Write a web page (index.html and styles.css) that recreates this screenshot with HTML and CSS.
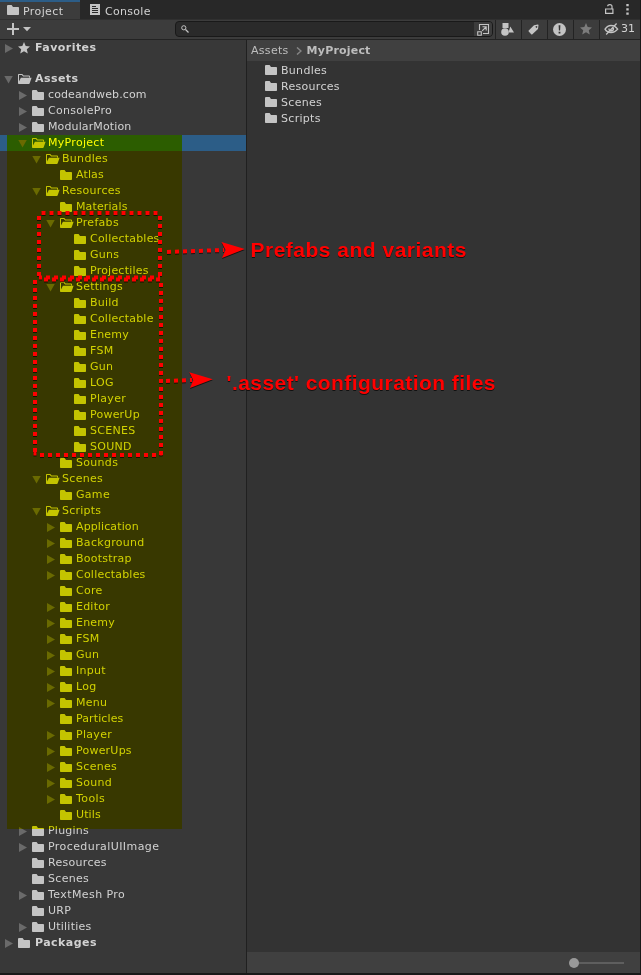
FILE: index.html
```html
<!DOCTYPE html>
<html lang="en">
<head>
<meta charset="utf-8">
<title>Project</title>
<link rel="stylesheet" href="styles.css">
</head>
<body>
<svg class="defs" width="0" height="0">
  <symbol id="folder" viewBox="0 0 12 10"><path d="M0 1Q0 0 1 0H4.6L6 2H11.2Q12 2 12 2.8V9.2Q12 10 11.2 10H.8Q0 10 0 9.2Z"/></symbol>
  <symbol id="open" viewBox="0 0 14 10"><path d="M0 .8Q0 0 .8 0H4.3L5.6 1.6H11Q12 1.6 12 2.6V3.6H11V2.6H5.1L3.8 1H1V7.5L2.9 3.8H13.6L11.7 9.3Q11.5 10 10.8 10H.8Q0 10 0 9.2Z"/></symbol>
  <symbol id="star" viewBox="0 0 12 12"><path d="M6 0L7.7 4.1L12 4.5L8.8 7.3L9.8 11.6L6 9.3L2.2 11.6L3.2 7.3L0 4.5L4.3 4.1Z"/></symbol>
</svg>
<div class="window">
  <header class="tabs">
    <div class="tab active"><svg class="f"><use href="#folder"/></svg><span>Project</span></div>
    <div class="tab console"><svg width="10" height="11" viewBox="0 0 10 11"><path fill-rule="evenodd" d="M0 0H10V11H0ZM2 2V3H6V2ZM2 4V5H8V4ZM2 6V7H8V6ZM2 8V9H8V8Z"/></svg><span>Console</span></div>
    <div class="tabtools">
      <svg width="9" height="10" viewBox="0 0 9 10"><path d="M.6 5H7.9V9.4H.6ZM7 5V2.5Q7 .6 4.8 .6Q2.7 .6 2.7 2.3" fill="none" stroke="#c4c4c4" stroke-width="1.2"/></svg>
      <svg width="3" height="11" viewBox="0 0 3 11"><path d="M.3 0h2.4v2.3H.3zM.3 4.2h2.4v2.3H.3zM.3 8.4h2.4v2.3H.3z"/></svg>
    </div>
  </header>
  <div class="toolbar">
    <svg class="add" width="24" height="12" viewBox="0 0 24 12"><path d="M5 0H7V5H12V7H7V12H5V7H0V5H5ZM16 4H24L20 8.2Z"/></svg>
    <div class="search">
      <svg width="8" height="8" viewBox="0 0 8 8"><path d="M4.5 4.5L7.5 7.5" stroke="#c4c4c4" stroke-width="1.3"/><circle cx="2.8" cy="2.8" r="2.1" fill="none" stroke="#c4c4c4"/></svg>
      <span class="pop"><svg width="13" height="13" viewBox="0 0 13 13"><path d="M2.5 7V1.5H11.5V10.5H6M.7 8.7H4.3V12.3H.7ZM5.2 7.8L9 4M5.5 3.8H9.2V7.5" fill="none" stroke="#c4c4c4" stroke-width="1.1"/></svg></span>
    </div>
    <div class="btn"><svg width="13" height="13" viewBox="0 0 13 13"><path d="M1.5 0H7.5V5H1.5ZM9.3 3.5L13 9.5H7.5Z"/><circle cx="4" cy="9" r="3.8"/></svg></div>
    <div class="btn"><svg width="11" height="11" viewBox="0 0 11 11"><path fill-rule="evenodd" d="M6 1.2L9.8 .5Q10.6 .4 10.5 1.2L10 5L4.4 10.2Q3.8 10.7 3.2 10.2L.7 7.6Q.2 7 .7 6.4ZM8.4 1.9A.9 .9 0 1 0 8.5 1.9Z"/></svg></div>
    <div class="btn"><svg width="13" height="13" viewBox="0 0 13 13"><circle cx="6.5" cy="6.5" r="6.5"/><path d="M5.6 2.2H7.4L7.1 7.6H5.9ZM5.6 8.8H7.4V10.5H5.6Z" fill="#333"/></svg></div>
    <div class="btn fav"><svg width="12" height="12"><use href="#star"/></svg></div>
    <div class="btn hidden"><svg width="15" height="12" viewBox="0 0 15 12"><path d="M1 6.2Q3.5 2.5 7 2.5Q11 2.5 13.7 6.2Q11 9.6 7 9.6Q3 9.6 1 6.2ZM2.2 11.5L12.6 .5M5 5.5Q4.8 8 7 8Q9.7 7.8 9.5 5" fill="none" stroke="#c4c4c4" stroke-width="1.3"/></svg><span>31</span></div>
  </div>
  <main class="panes">
    <ul class="tree">
      <li class="l0 b first"><i class="c"></i><svg class="s"><use href="#star"/></svg>Favorites</li>
      <li class="l0 b"><i class="e"></i><svg class="o"><use href="#open"/></svg>Assets</li>
      <li class="l1 tight"><i class="c"></i><svg class="f"><use href="#folder"/></svg>codeandweb.com</li>
      <li class="l1"><i class="c"></i><svg class="f"><use href="#folder"/></svg>ConsolePro</li>
      <li class="l1 tight"><i class="c"></i><svg class="f"><use href="#folder"/></svg>ModularMotion</li>
      <li class="l1 selected"><i class="e"></i><svg class="o"><use href="#open"/></svg>MyProject</li>
      <li class="l2"><i class="e"></i><svg class="o"><use href="#open"/></svg>Bundles</li>
      <li class="l3 tight"><i></i><svg class="f"><use href="#folder"/></svg>Atlas</li>
      <li class="l2"><i class="e"></i><svg class="o"><use href="#open"/></svg>Resources</li>
      <li class="l3 tight"><i></i><svg class="f"><use href="#folder"/></svg>Materials</li>
      <li class="l3"><i class="e"></i><svg class="o"><use href="#open"/></svg>Prefabs</li>
      <li class="l4 snug"><i></i><svg class="f"><use href="#folder"/></svg>Collectables</li>
      <li class="l4"><i></i><svg class="f"><use href="#folder"/></svg>Guns</li>
      <li class="l4 snug"><i></i><svg class="f"><use href="#folder"/></svg>Projectiles</li>
      <li class="l3 snug"><i class="e"></i><svg class="o"><use href="#open"/></svg>Settings</li>
      <li class="l4 snug"><i></i><svg class="f"><use href="#folder"/></svg>Build</li>
      <li class="l4 snug"><i></i><svg class="f"><use href="#folder"/></svg>Collectable</li>
      <li class="l4 snug"><i></i><svg class="f"><use href="#folder"/></svg>Enemy</li>
      <li class="l4"><i></i><svg class="f"><use href="#folder"/></svg>FSM</li>
      <li class="l4"><i></i><svg class="f"><use href="#folder"/></svg>Gun</li>
      <li class="l4"><i></i><svg class="f"><use href="#folder"/></svg>LOG</li>
      <li class="l4"><i></i><svg class="f"><use href="#folder"/></svg>Player</li>
      <li class="l4 snug"><i></i><svg class="f"><use href="#folder"/></svg>PowerUp</li>
      <li class="l4"><i></i><svg class="f"><use href="#folder"/></svg>SCENES</li>
      <li class="l4"><i></i><svg class="f"><use href="#folder"/></svg>SOUND</li>
      <li class="l3"><i></i><svg class="f"><use href="#folder"/></svg>Sounds</li>
      <li class="l2"><i class="e"></i><svg class="o"><use href="#open"/></svg>Scenes</li>
      <li class="l3"><i></i><svg class="f"><use href="#folder"/></svg>Game</li>
      <li class="l2 snug"><i class="e"></i><svg class="o"><use href="#open"/></svg>Scripts</li>
      <li class="l3 tight"><i class="c"></i><svg class="f"><use href="#folder"/></svg>Application</li>
      <li class="l3"><i class="c"></i><svg class="f"><use href="#folder"/></svg>Background</li>
      <li class="l3 snug"><i class="c"></i><svg class="f"><use href="#folder"/></svg>Bootstrap</li>
      <li class="l3 snug"><i class="c"></i><svg class="f"><use href="#folder"/></svg>Collectables</li>
      <li class="l3"><i></i><svg class="f"><use href="#folder"/></svg>Core</li>
      <li class="l3 snug"><i class="c"></i><svg class="f"><use href="#folder"/></svg>Editor</li>
      <li class="l3 snug"><i class="c"></i><svg class="f"><use href="#folder"/></svg>Enemy</li>
      <li class="l3"><i class="c"></i><svg class="f"><use href="#folder"/></svg>FSM</li>
      <li class="l3"><i class="c"></i><svg class="f"><use href="#folder"/></svg>Gun</li>
      <li class="l3"><i class="c"></i><svg class="f"><use href="#folder"/></svg>Input</li>
      <li class="l3"><i class="c"></i><svg class="f"><use href="#folder"/></svg>Log</li>
      <li class="l3 snug"><i class="c"></i><svg class="f"><use href="#folder"/></svg>Menu</li>
      <li class="l3 tight"><i></i><svg class="f"><use href="#folder"/></svg>Particles</li>
      <li class="l3"><i class="c"></i><svg class="f"><use href="#folder"/></svg>Player</li>
      <li class="l3 snug"><i class="c"></i><svg class="f"><use href="#folder"/></svg>PowerUps</li>
      <li class="l3"><i class="c"></i><svg class="f"><use href="#folder"/></svg>Scenes</li>
      <li class="l3"><i class="c"></i><svg class="f"><use href="#folder"/></svg>Sound</li>
      <li class="l3 wide"><i class="c"></i><svg class="f"><use href="#folder"/></svg>Tools</li>
      <li class="l3 tight"><i></i><svg class="f"><use href="#folder"/></svg>Utils</li>
      <li class="l1 snug"><i class="c"></i><svg class="f"><use href="#folder"/></svg>Plugins</li>
      <li class="l1 wide"><i class="c"></i><svg class="f"><use href="#folder"/></svg>ProceduralUIImage</li>
      <li class="l1"><i></i><svg class="f"><use href="#folder"/></svg>Resources</li>
      <li class="l1"><i></i><svg class="f"><use href="#folder"/></svg>Scenes</li>
      <li class="l1 wide"><i class="c"></i><svg class="f"><use href="#folder"/></svg>TextMesh Pro</li>
      <li class="l1"><i></i><svg class="f"><use href="#folder"/></svg>URP</li>
      <li class="l1 snug"><i class="c"></i><svg class="f"><use href="#folder"/></svg>Utilities</li>
      <li class="l0 b"><i class="c"></i><svg class="f"><use href="#folder"/></svg>Packages</li>
    </ul>
    <section class="content">
      <nav class="crumbs"><span>Assets</span><svg width="6" height="8" viewBox="0 0 6 8"><path d="M1 .5L5 4L1 7.5" fill="none" stroke="#858585" stroke-width="1.5"/></svg><b>MyProject</b></nav>
      <ul class="list">
        <li><svg class="f"><use href="#folder"/></svg>Bundles</li>
        <li><svg class="f"><use href="#folder"/></svg>Resources</li>
        <li><svg class="f"><use href="#folder"/></svg>Scenes</li>
        <li><svg class="f"><use href="#folder"/></svg>Scripts</li>
      </ul>
      <footer class="status"><div class="slider"><span class="knob"></span></div></footer>
    </section>
  </main>
  <div class="highlight"></div>
  <svg class="notes" width="641" height="975" viewBox="0 0 641 975">
    <g fill="none" stroke="#f00" stroke-width="4" stroke-dasharray="4 4">
      <path d="M41.5 213H160"/>
      <path d="M39 216V278"/>
      <path d="M160 216V278"/>
      <path d="M39 277.5H160" stroke-dashoffset="1"/>
      <path d="M35 280V455"/>
      <path d="M161 283V455"/>
      <path d="M40 279.5H160" stroke-dashoffset="4"/>
      <path d="M40 455H160"/>
      <path d="M33.5 453.5H36.5M159.5 453.5H162.5" stroke-dasharray="none"/>
      <path d="M167 252L224 250"/>
      <path d="M166 381L192 380"/>
    </g>
    <path fill="#f00" d="M221.5 242L244.8 249L222 258L225.5 250ZM189.3 372.3L212.8 379.2L190 388L193.3 380.3Z"/>
    <text x="250.5" y="257" textLength="216">Prefabs and variants</text>
    <text x="226.5" y="390" textLength="269">'.asset' configuration files</text>
  </svg>
</div>
</body>
</html>
```
FILE: styles.css
```css
* { box-sizing: border-box; }
body { margin: 0; background: #191919; font: 11px/16px "DejaVu Sans", sans-serif; letter-spacing: .3px; color: #d2d2d2; }
ul { margin: 0; padding: 0; list-style: none; }
svg { flex: none; display: block; fill: #c4c4c4; }
.defs { position: absolute; }
.window { position: relative; isolation: isolate; width: 641px; height: 975px; padding-bottom: 2px; border-right: 1px solid #191919; display: flex; flex-direction: column; background: #383838; }
.window::after { content: ""; position: absolute; left: 0; right: 0; bottom: 0; height: 2px; background: #191919; }
svg.f { width: 12px; height: 10px; }
svg.o { width: 14px; height: 10px; }
svg.s { width: 12px; height: 12px; }

.tabs { height: 19px; flex: none; display: flex; background: #282828; }
.tab { display: flex; align-items: center; padding-top: 2px; }
.tab.active { width: 80px; padding-left: 7px; gap: 4px; background: #3c3c3c; border-top: 2px solid #2c5d87; padding-top: 0; }
.tab.active svg { margin-bottom: 1px; }
.tab.active span { position: relative; top: 1px; letter-spacing: .4px; }
.tab.console { padding-left: 10px; gap: 5px; }
.tab.console svg { margin-bottom: 3px; }
.tab.console span { position: relative; top: 1px; }
.tabtools { margin-left: auto; display: flex; align-items: center; gap: 12px; padding-right: 11px; }
.tabtools svg { margin-bottom: 1px; }

.toolbar { height: 21px; flex: none; display: flex; align-items: center; background: #3c3c3c; border-top: 1px solid #303030; border-bottom: 1px solid #232323; }
.add { margin: 0 0 2px 7px; }
.search { margin: 0 0 1px 144px; width: 318px; height: 16px; display: flex; align-items: center; padding-left: 5px; background: #2a2a2a; border: 1px solid #191919; border-radius: 4px; }
.pop { margin-left: auto; width: 18px; height: 14px; display: flex; align-items: center; justify-content: center; background: #3c3c3c; border-radius: 0 3px 3px 0; }
.btn { width: 26px; height: 19px; display: flex; align-items: center; justify-content: center; padding-bottom: 1px; border-left: 1px solid #232323; }
.search + .btn { margin-left: 2px; }
.search + .btn svg { margin-right: 2px; }
.search + .btn + .btn svg { margin-right: 3px; }
.btn + .btn + .btn:not(.fav):not(.hidden) svg { margin-right: 2px; }
.fav svg { fill: #7c7c7c; margin-right: 2px; }
.btn.hidden { width: 41px; gap: 2px; letter-spacing: 0; padding-right: 1px; }

.panes { flex: 1; min-height: 0; display: flex; }
.tree { width: 247px; border-right: 1px solid #202020; }
.tree li { height: 16px; display: flex; align-items: center; line-height: 14px; padding-bottom: 1px; }
.tree .first { margin-bottom: 15px; }
.tree svg { margin: 0 4px 0 0; }
.tree svg.f { margin-top: 1px; }
.tree svg.o { margin-right: 2px; }
.tree svg.s { margin: 0 5px 0 0; }
.tree .tight { letter-spacing: .12px; }
.tree .snug { letter-spacing: .22px; }
.tree .wide { letter-spacing: .42px; }
.tree .b { font-weight: bold; letter-spacing: .45px; }
.tree .b svg.o { margin-right: 3px; }
.tree .b svg.f { margin-right: 5px; }
.l0 { padding-left: 5px; }
.l1 { padding-left: 19px; }
.l2 { padding-left: 33px; }
.l3 { padding-left: 47px; }
.l4 { padding-left: 61px; }
.tree i { width: 8px; height: 9px; margin: 2px 5px 0 0; }
.tree i.c { background: #6a6a6a; clip-path: polygon(0 0, 100% 50%, 0 100%); }
.tree i.e { margin: 2px 5px 0 -1px; width: 9px; height: 8px; background: #6a6a6a; clip-path: polygon(0 0, 100% 0, 50% 100%); }
.tree .selected { background: #2c5d87; color: #fff; }

.content { flex: 1; display: flex; flex-direction: column; background: #333; }
.crumbs { height: 21px; display: flex; align-items: center; padding-left: 4px; background: #404040; color: #bdbdbd; }
.crumbs svg { margin: 0 5px 0 7px; }
.crumbs b { letter-spacing: .2px; }
.list { padding-top: 2px; }
.list li { height: 16px; display: flex; align-items: center; gap: 4px; padding-left: 18px; }
.list svg { margin-bottom: 3px; }
.status { margin-top: auto; height: 21px; display: flex; align-items: center; justify-content: flex-end; padding-right: 16px; background: #404040; }
.slider { width: 55px; height: 2px; display: flex; align-items: center; background: #5e5e5e; }
.knob { width: 10px; height: 10px; border-radius: 50%; background: #999; }

.highlight { position: absolute; left: 7px; top: 135px; width: 175px; height: 694px; background: #ff0; mix-blend-mode: multiply; }
.notes { position: absolute; left: 0; top: 0; filter: drop-shadow(0 1px .5px rgba(0, 0, 0, .65)); }
.notes text { font: bold 21px "Liberation Sans", sans-serif; fill: #f00; letter-spacing: 0; }
```
